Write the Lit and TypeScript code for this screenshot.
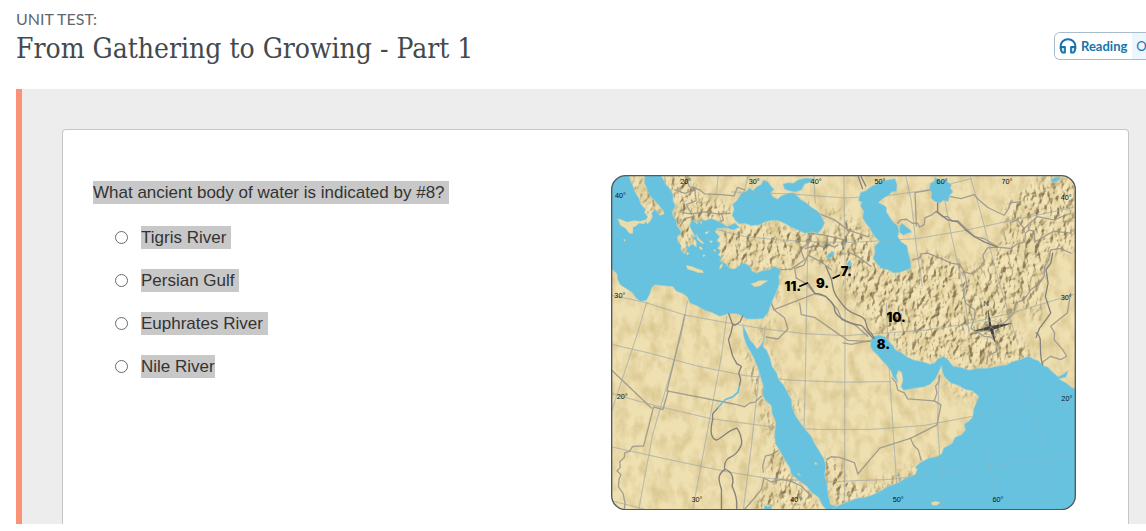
import { LitElement, html, css, svg } from "lit";
import { customElement, state } from "lit/decorators.js";

const SEAS = [
  // Mediterranean
  "M18 15H72L78 36 85 50 91 68 102 85 108 104 122 118 119 128 128 140 122 155 127 162 136 154 143 140 140 130 150 118 158 126 165 137 178 132 175 121 162 106 150 92 137 80 128 62 122 46 118 40 120 15H168L176 30 182 42 194 55 205 75 204 92 212 108 202 125 204 138 215 152 214 166 224 178 230 190 217 200 220 218 229 226 228 240 238 252 247 238 244 222 252 232 262 222 275 232 274 214 258 198 274 202 262 184 254 166 262 150 280 164 274 150 292 162 288 148 302 152 320 146 345 156 368 170 390 160 405 172 385 180 365 174 338 175 330 186 345 200 336 212 346 222 338 235 348 242 340 256 352 262 344 272 362 280 370 292 385 298 400 292 410 280 424 282 435 290 442 304 456 310 475 302 495 300 508 290 523 296 528 306 522 318 524 335 520 355 514 370 500 400 490 430 475 447 452 448 425 448 412 438 395 432 370 432 345 440 320 428 300 422 276 408 255 400 248 382 235 372 214 364 204 350 175 348 150 345 140 354 135 372 125 391 108 396 94 386 82 368 60 354 46 345 38 330 36 312 18 295Z",
  // Black Sea and Azov
  "M445 62 456 50 470 44 476 30 490 36 500 50 508 58 498 68 504 80 518 88 530 78 550 70 566 68 578 78 590 90 604 98 620 112 640 124 652 142 660 160 652 176 640 190 622 186 600 190 580 180 560 172 540 160 520 152 500 152 480 156 468 164 440 167 420 160 404 162 392 152 382 136 388 118 384 104 398 90 410 70 425 64 434 54Z",
  "M535 42 550 38 566 40 580 30 604 24 628 26 620 36 600 42 590 60 572 66 552 62 540 58Z",
  // Caspian, Aral and small lakes
  "M800 50 816 42 824 34 850 30 872 26 878 44 876 64 862 66 852 76 838 84 828 92 822 98 838 106 846 112 846 126 856 142 866 156 880 168 884 184 880 200 890 216 908 228 912 250 918 272 920 296 902 302 884 308 870 310 850 300 832 296 818 282 806 266 812 248 810 230 826 214 816 206 806 194 796 174 784 160 774 142 778 124 768 108 772 96 762 92 768 68 784 62Z",
  "M886 168 894 160 904 170 918 180 922 188 908 190 898 196 886 188Z",
  "M978 40 990 34 992 22 1002 28 1012 32 1024 28 1030 36 1042 44 1038 54 1046 66 1036 76 1032 94 1016 92 1006 100 990 94 980 84 982 70 976 56Z",
  "M1340 30 1352 22 1370 20 1362 32 1346 38Z",
  "M664 262 674 250 690 246 686 258 674 266Z",
  "M728 278 738 270 740 286 732 292Z",
  // Red Sea
  "M414 462 420 478 428 494 436 512 446 522 457 538 466 530 480 506 474 530 486 542 496 566 502 590 516 610 522 630 536 646 548 668 560 690 562 712 572 738 586 758 600 778 618 798 630 822 642 842 658 868 664 890 660 916 668 946 670 974 678 1006 700 1012 705 1025H670L655 1010 642 984 622 970 606 950 580 932 560 914 556 896 540 870 526 844 512 822 510 790 514 760 502 730 500 708 482 692 474 676 476 650 468 622 460 596 448 566 436 544 424 522 416 496Z",
  // Persian Gulf and Arabian Sea
  "M800 510 806 500 824 496 842 502 852 514 866 528 874 542 892 550 908 562 930 572 954 576 976 584 992 580 1000 568 1018 560 1032 572 1046 590 1070 594 1096 602 1120 596 1150 596 1180 590 1206 586 1226 576 1248 570 1274 560 1288 568 1304 574 1316 588 1330 592 1342 604 1362 622 1378 614 1392 602 1386 622 1364 628 1386 640 1404 654 1416 658V1024H672L690 1016 712 1004 730 998 754 988 784 984 806 976 830 964 850 952 882 940 904 926 932 916 940 900 932 894 948 880 974 866 996 862 1012 854 1018 836 1044 822 1052 804 1072 796 1084 782 1080 764 1096 754 1106 742 1108 720 1124 680 1104 664 1084 660 1064 648 1040 640 1022 624 1014 606 1012 588 1004 606 994 626 978 644 960 652 930 656 898 662 890 652 896 632 892 608 882 602 876 618 880 640 866 622 860 604 846 586 832 572 820 556 806 544 798 530Z",
  "M480 1008 490 1012 500 1010 500 1024H478Z",
];

const ISLANDS = [
  "M38 146 52 150 66 156 88 152 106 154 126 148 118 162 102 160 94 168 84 172 84 190 74 192 62 176 46 166Z",
  "M244 286 262 290 276 296 294 302 296 310 278 308 262 302 248 298Z",
  "M438 342 452 338 464 332 490 332 476 342 468 348 450 352Z",
  "M346 286 354 280 352 292 344 298Z", "M302 186 312 184 308 192 300 192Z", "M314 212 324 214 318 220Z",
  "M244 246 254 250 246 256Z", "M282 232 288 230 294 238 288 240Z", "M294 254 302 256 296 262Z",
  "M274 192 282 206 298 220 292 222 278 210Z", "M56 208 62 210 58 216Z", "M326 240 334 240 330 246Z",
  "M980 1000 994 996 1008 1000 998 1008 984 1008Z", "M578 912 590 918 582 918Z", "M630 878 640 884 632 886Z",
];

const MOUNTAINS = [
  "M72 15 92 15 118 40 128 62 150 92 178 132 165 137 150 118 128 130 102 85Z",
  "M38 146 126 148 84 190Z",
  "M170 15 250 15 290 80 380 110 370 130 340 150 280 150 262 222 235 252 215 200 205 75Z",
  "M440 45 400 15 430 15Z",
  "M340 178 410 172 480 158 560 172 640 192 700 190 700 145 640 118 660 112 720 130 790 190 810 240 806 270 850 306 920 302 970 245 1050 270 1090 310 1180 250 1200 190 1210 100 1270 50 1330 18 1416 30 1416 240 1340 250 1310 330 1310 470 1270 410 1200 440 1290 565 1226 576 1096 600 1020 565 992 580 900 555 840 500 790 440 720 360 700 300 640 280 600 240 560 296 480 300 440 300 385 298 340 270Z",
  "M520 300 532 310 520 370 480 500 470 530 464 500 490 430Z",
  "M414 510 440 560 475 650 480 690 460 690 430 600Z",
  "M460 690 480 695 512 790 512 822 560 914 650 1010 640 1022 440 1022 500 930 490 850 500 840Z",
  "M480 510 500 540 530 640 580 700 600 770 650 860 705 880 730 930 780 960 930 890 1012 850 1000 864 930 916 820 970 690 1016 665 920 640 840 560 715 520 630Z",
  "M1012 620 1040 640 1120 680 1110 700 1040 660Z",
];

const GRID = [
  "M18 376 120 398 240 436 360 458 480 478 600 492 720 498 840 490 960 482 1080 464 1230 428 1416 372",
  "M18 524 140 552 280 590 420 618 560 632 720 638 860 636",
  "M18 672 150 708 320 748 500 772 640 780 800 780 960 768 1130 736 1410 668",
  "M18 832 180 868 360 906 480 926 660 938 860 930 1060 904 1240 880 1410 858",
  "M18 994 120 1020", "M340 180 420 200 520 210 640 216 740 218 940 206 1080 182 1260 144 1410 112",
  "M380 66 560 72 720 84 840 78 960 62 1100 26",
  "M125 398 98 490 20 724", "M248 395 228 500 142 800 102 1018", "M366 440 350 560 264 1020",
  "M482 470 466 590 440 830 416 1020", "M612 96 606 420 602 640 598 780", "M718 15 722 300 720 1000",
  "M905 20 920 90 936 230 954 350", "M846 400 852 560 866 780 878 960", "M1020 80 1040 190 1080 370 1096 500",
  "M1098 20 1130 130 1180 320 1240 520", "M1004 620 1000 760 1016 1020", "M1118 690 1150 820 1170 980",
  "M1240 580 1310 800 1340 1000", "M430 20 412 90", "M340 20 336 60", "M628 15 632 100",
];

const BORDERS = [
  "M240 15 254 50 285 60 300 72 350 74 388 78 398 52 420 60", "M232 128 260 132 300 126 340 132 376 130",
  "M210 60 240 70 270 60 274 92 244 104 260 132", "M225 170 240 146 264 140", "M340 160 356 150 350 130",
  "M602 236 640 226 656 232 664 220 690 232 700 226", "M524 300 560 298 600 270 588 240 620 212 612 190 660 196 720 210",
  "M575 325 570 296 598 286 610 256 650 276 680 300", "M575 325 602 340 632 372 508 420 500 400",
  "M632 372 664 380 700 420 712 450 752 466 790 500", "M508 420 540 445 550 478 520 508 484 502",
  "M585 400 590 435 632 444 700 492 730 512 800 516",
  "M240 436 205 585 186 664 380 702 400 706 420 712 436 700 450 698 470 680",
  "M190 664 174 720 146 712 116 830 96 830 82 832 74 846 60 850 58 864 44 878 46 894 36 904 48 916 42 930 40 952 54 972 60 1000 58 1022",
  "M18 600 140 716", "M476 908 474 890 482 860 500 856 520 844", "M418 1022 446 990 470 960 478 926 500 938 530 930 560 936 590 950 620 980",
  "M862 625 875 640 880 662 900 670 910 688 990 694 1010 706 998 766 920 806 826 836 760 914 750 880 705 864 680 862 668 870", "M990 694 998 670 994 650 1004 636 1006 618",
  "M918 806 928 828 942 842 950 872", "M716 520 740 524 800 512",
  "M880 160 888 150 906 148 924 160 940 160 946 172 960 164 962 144 984 134 996 124 1014 140 1030 140 1044 154 1060 152 1110 200 1140 206 1180 232 1220 236 1240 222 1262 216 1264 190 1274 180 1290 184 1292 216 1304 210 1320 200 1350 184 1400 190",
  "M936 168 932 68 980 60", "M1038 80 1070 86 1110 74 1124 90 1150 112 1174 124 1200 136 1212 118 1220 98 1250 96",
  "M924 270 946 264 950 252 970 250 1000 262 1040 280 1066 284 1080 306 1100 312 1124 296 1140 276 1136 256 1150 234 1180 232",
  "M1080 306 1088 340 1078 370 1084 400 1112 420 1112 440 1100 476 1140 500 1160 502 1180 520 1176 546 1150 560 1148 584",
  "M1112 490 1150 480 1200 460 1230 430 1234 400 1260 390 1280 360 1300 346 1320 320 1322 290 1334 270 1340 240 1370 236 1400 250",
  "M1310 588 1320 574 1340 560 1370 570 1388 560 1376 540 1350 510 1352 490 1340 470 1364 450 1390 430 1400 370",
  "M730 246 760 260 800 290", "M640 130 690 150 730 180 790 200", "M1220 158 1240 150 1260 176 1300 140 1350 150 1400 130",
];

const RIVERS = [
  "M372 432 384 466 378 492 371 510 376 530 384 560 396 582 410 590 402 610 408 630 404 650", "M414 438 406 456 392 466 384 466",
  "M340 714 C330 730 320 726 324 748 C316 780 318 806 334 812 C354 806 366 784 396 776 C404 784 414 810 410 826 C400 850 392 856 372 866 C360 874 358 890 360 900 C338 916 340 930 350 960 V1018",
  "M360 900 C384 906 388 930 382 950 C390 970 398 984 396 1020", "M680 326C686 350 684 366 700 386S722 424 760 436 776 474 800 490L810 506",
  "M610 340 632 372 C660 370 690 400 690 418 S720 460 772 468 L806 506", "M1000 100 1000 126 1030 150 1060 156 1084 180 1110 200 1140 216 1180 232",
  "M1346 250 1340 280 1326 300 1332 340 1324 380 1340 430 1326 450 1306 476 1296 504",
  "M1296 490C1320 500 1300 540 1316 586", "M770 20 784 48", "M760 15 774 56",
  "M664 290 680 326",
];

const DEGREES: [number, number, string][] = [
  [226, 42, "20°"], [432, 42, "30°"], [618, 42, "40°"], [810, 42, "50°"], [997, 42, "60°"], [1192, 42, "70°"],
  [30, 85, "40°"], [28, 386, "30°"], [35, 688, "20°"], [1370, 91, "40°"], [1370, 391, "30°"], [1372, 695, "20°"],
  [260, 999, "30°"], [557, 999, "40°"], [865, 999, "50°"], [1165, 999, "60°"],
];

const MARKS: [number, number, string][] = [
  [540, 365, "11."], [634, 356, "9."], [709, 319, "7."], [846, 457, "10."], [817, 539, "8."],
];

@customElement("region-map")
class RegionMap extends LitElement {
  static styles = css`
    :host { display: block; }
    .map { display: block; width: 100%; height: auto; }
    .sea { fill: #66c2de; stroke: #a9cfc9; stroke-width: 2; }
    .land { fill: #efe0b2; }
    .isle { fill: #e6dcae; stroke: #c9c79c; stroke-width: 1; }
    .line { fill: none; stroke-linejoin: round; stroke-linecap: round; }
    .grid { stroke: #a5a19b; stroke-width: 3; opacity: 0.55; }
    .over { stroke: #9ab4bc; opacity: 0.3; }
    .border { stroke: #98938a; stroke-width: 4; opacity: 0.85; }
    .river { stroke: #85817a; stroke-width: 4; }
    .nile { stroke: #62c1df; stroke-width: 5; }
    .degree { font: 22px "Liberation Sans", Arial, sans-serif; fill: #111; }
    .mark { font: 900 39px Inter, "Liberation Sans", sans-serif; fill: #000; }
    .north { font: 24px "Liberation Sans", Arial, sans-serif; fill: #444; }
    .frame { fill: none; stroke: #54585a; stroke-width: 4; }
    .pointer { stroke: #000; stroke-width: 5; }
  `;

  render() {
    return html`
      <svg class="map" viewBox="18 15 1398 1008" role="img" aria-label="Map of the ancient Near East">
        <defs>
          <clipPath id="edge"><rect x="20" y="17" width="1394" height="1004" rx="42" /></clipPath>
          <filter id="relief" x="0" y="0" width="1" height="1" color-interpolation-filters="sRGB">
            <feGaussianBlur in="SourceAlpha" stdDeviation="14" result="area" />
            <feTurbulence type="fractalNoise" baseFrequency="0.06 0.04" numOctaves="3" seed="7" result="noise" />
            <feColorMatrix in="noise" values="0 0 0 0 0 0 0 0 0 0 0 0 0 0 0 1 0 0 0 0" result="height" />
            <feDiffuseLighting in="height" surfaceScale="13" lighting-color="#fff" result="light">
              <feDistantLight azimuth="215" elevation="45" />
            </feDiffuseLighting>
            <feColorMatrix in="light" values="0 0 0 0 .52 0 0 0 0 .46 0 0 0 0 .32 -1.5 0 0 0 .96" result="shade" />
            <feColorMatrix in="light" values="0 0 0 0 1 0 0 0 0 .95 0 0 0 0 .8 1.6 0 0 0 -1.2" result="shine" />
            <feMerge result="both"><feMergeNode in="shade" /><feMergeNode in="shine" /></feMerge>
            <feComposite in="both" in2="area" operator="in" />
          </filter>
          <filter id="plain" x="0" y="0" width="1" height="1" color-interpolation-filters="sRGB">
            <feTurbulence type="fractalNoise" baseFrequency="0.03 0.02" numOctaves="4" seed="3" />
            <feColorMatrix values="0 0 0 0 .76 0 0 0 0 .67 0 0 0 0 .42 1 0 0 0 -.38" />
          </filter>
        </defs>
        <g clip-path="url(#edge)">
          <rect class="land" x="18" y="15" width="1398" height="1008" />
          <rect x="18" y="15" width="1398" height="1008" filter="url(#plain)" />
          <g filter="url(#relief)">${MOUNTAINS.map((d) => svg`<path d=${d} />`)}</g>
          ${GRID.map((d) => svg`<path class="line grid" d=${d} />`)}
          ${BORDERS.map((d) => svg`<path class="line border" d=${d} />`)}
          ${SEAS.map((d) => svg`<path class="sea" d=${d} />`)}
          ${ISLANDS.map((d) => svg`<path class="isle" d=${d} />`)}
          ${GRID.map((d) => svg`<path class="line grid over" d=${d} />`)}
          ${RIVERS.map((d) => svg`<path class="line river" d=${d} />`)}
          <path class="line nile" d="M404 650 400 668 384 682 362 690 340 714" />
          <path fill="#444" d="M1151 416 1162 468 1226 460 1168 480 1174 522 1157 482 1108 484 1154 470Z" />
          <path class="line grid" d="M1134 452 1194 498M1190 446 1128 504M1136 475A26 22 0 1 0 1188 475A26 22 0 1 0 1136 475" />
          <text class="north" x="1137" y="408">N</text>
        </g>
        <path class="pointer" d="M584 350 610 339M684 326 706 316" />
        ${DEGREES.map(([x, y, t]) => svg`<text class="degree" x=${x} y=${y}>${t}</text>`)}
        ${MARKS.map(([x, y, t]) => svg`<text class="mark" x=${x} y=${y}>${t}</text>`)}
        <rect class="frame" x="20" y="17" width="1394" height="1004" rx="42" />
      </svg>
    `;
  }
}

@customElement("app-root")
class AppRoot extends LitElement {
  @state() private answer = "";

  private options = ["Tigris River ", "Persian Gulf ", "Euphrates River ", "Nile River"];

  static styles = css`
    :host { display: block; background: #fff; color: #333; overflow: hidden; font-family: "Liberation Sans", Arial, sans-serif; }
    .header { display: flex; justify-content: space-between; align-items: flex-start; padding: 9px 0 21px 16px; }
    .kicker { margin: 0; font: 16px/20px Lato, sans-serif; color: #5f6870; }
    .title { margin: 0; font: 400 28px/39px "DejaVu Serif Condensed", "DejaVu Serif", serif; color: #434a4d; }
    .tools { display: flex; flex: none; box-sizing: border-box; width: 92px; height: 28px; margin-top: 23px; overflow: hidden; border: 1px solid #a9bccb; border-right: 0; border-radius: 6px 0 0 6px; }
    .tool { display: flex; flex: none; align-items: center; gap: 4px; border: 0; padding: 0 5px 1px 4px; background: #fff; color: #1675ac; font: 700 13px/24px Lato, sans-serif; white-space: nowrap; }
    .toggle { background: #edf6fc; font-weight: 400; }
    .icon { width: 18px; height: 16px; }
    .stage { margin-left: 16px; border-left: 6px solid #fa9375; background: #ededed; padding: 40px 17px 0 40px; }
    .card { display: grid; grid-template-columns: 1fr 465px; gap: 24px; background: #fff; border: 1px solid #c6c6c6; border-bottom: 0; border-radius: 4px 4px 0 0; padding: 45px 52px 14px 30px; }
    .quiz { border: 0; margin: 6px 0 0; padding: 0; min-width: 0; font-size: 17px; line-height: 23px; }
    .question { padding: 0; }
    .mark { background: #c8c8c8; color: #333; white-space: pre-wrap; display: inline-block; }
    .options { display: grid; gap: 20px; padding: 22px 0 0 22px; }
    .option { display: flex; align-items: center; gap: 13px; }
    .radio { appearance: none; box-sizing: border-box; width: 13px; height: 13px; margin: 0; border: 1px solid #6b6b6b; border-radius: 50%; background: #fff; }
    .radio:checked { border: 4px solid #1675ac; }
  `;

  render() {
    return html`
      <header class="header">
        <div>
          <p class="kicker">UNIT TEST:</p>
          <h1 class="title">From Gathering to Growing - Part 1</h1>
        </div>
        <div class="tools">
          <button class="tool" type="button">
            <svg class="icon" viewBox="0 0 18 16" aria-hidden="true">
              <path d="M1.6 11V8.400C1.600 4.200 4.800 1.300 9 1.300S16.400 4.200 16.400 8.400V11" fill="none" stroke="#1675ac" stroke-width="2" />
              <path d="M2 9H6V14.500H3.200L2 12.500ZM16 9H12V14.500H14.800L16 12.500Z" fill="#c9e4f4" stroke="#1675ac" stroke-width="1.800" stroke-linejoin="round" />
            </svg>
            Reading
          </button>
          <button class="tool toggle" type="button">O</button>
        </div>
      </header>
      <main class="stage">
        <section class="card">
          <fieldset class="quiz">
            <legend class="question"><span class="mark">What ancient body of water is indicated by #8? </span></legend>
            <div class="options">
              ${this.options.map(
                (text) => html`
                  <label class="option">
                    <input class="radio" type="radio" name="answer" .checked=${this.answer === text} @change=${() => (this.answer = text)} />
                    <span class="mark">${text}</span>
                  </label>
                `
              )}
            </div>
          </fieldset>
          <region-map></region-map>
        </section>
      </main>
    `;
  }
}
